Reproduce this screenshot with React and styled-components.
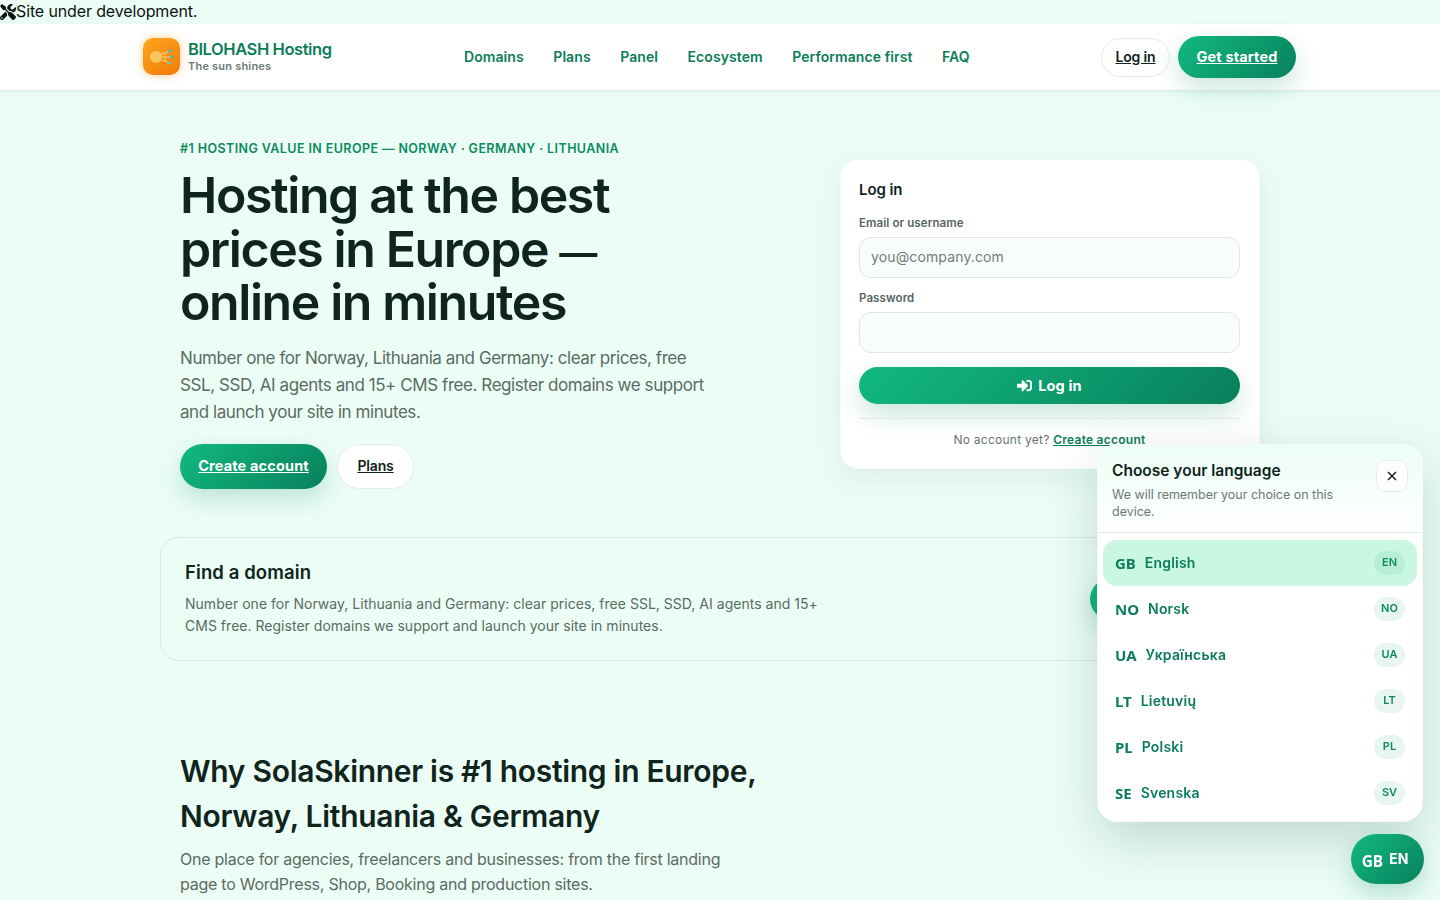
import React from 'react'
import styled, { createGlobalStyle } from 'styled-components'
import { FaTools, FaSignInAlt } from 'react-icons/fa'

const GlobalStyle = createGlobalStyle`
    html, body {
        margin: 0;
        padding: 0;
        background: #ecfdf5;
        font-family: Inter, "Noto Sans", sans-serif;
        color: #0f241c;
        overflow: hidden;
        height: 900px;
    }
`

const Banner = styled.div`
    height: 24px;
    display: flex;
    align-items: center;
    font-size: 16px;
    letter-spacing: -0.13px;
    line-height: 23px;
    padding-bottom: 1px;
    box-sizing: border-box;
    color: #0b1411;
    background: #ecfdf5;
`

const Header = styled.header`
    height: 66px;
    background: #fff;
    border-bottom: 1px solid #dcebe5;
    box-shadow: 0 1px 6px rgba(15, 80, 60, 0.05);
    box-sizing: content-box;
`

const HeaderInner = styled.div`
    width: 1152px;
    height: 66px;
    margin: 0 auto;
    display: flex;
    align-items: center;
`

const Brand = styled.div`
    width: 320px;
    display: flex;
    align-items: center;
    gap: 8px;
    margin-top: -1px;
`

const LogoBox = styled.div`
    width: 37px;
    height: 37px;
    border-radius: 10px;
    background: linear-gradient(145deg, #fda61f, #f27a06);
    box-shadow: 0 0 8px rgba(250, 160, 40, 0.55);
    display: flex;
    align-items: center;
    justify-content: center;
    margin-left: -1px;
`

const BrandName = styled.div`
    font-size: 16.5px;
    font-weight: 600;
    letter-spacing: -0.42px;
    color: #0b7d5a;
    line-height: 20px;
`

const BrandTag = styled.div`
    font-size: 11px;
    font-weight: 600;
    letter-spacing: 0.2px;
    color: #6b7a74;
    line-height: 15px;
`

const Nav = styled.nav`
    display: flex;
    gap: 29.5px;
    flex: 1;
    margin-top: -2px;
`

const NavLink = styled.a`
    font-size: 14px;
    font-weight: 600;
    letter-spacing: 0.08px;
    color: #0b7d5a;
`

const HeaderActions = styled.div`
    display: flex;
    gap: 8px;
    align-items: center;
`

const GhostButton = styled.a`
    display: flex;
    align-items: center;
    justify-content: center;
    box-sizing: border-box;
    width: ${p => p.$width}px;
    height: ${p => p.$height}px;
    padding-bottom: 2px;
    border-radius: 999px;
    background: #fff;
    border: 1px solid #e4ede9;
    font-size: 14px;
    font-weight: 600;
    letter-spacing: -0.15px;
    color: #0f241c;
    text-decoration: underline;
`

const PrimaryButton = styled.a`
    display: flex;
    align-items: center;
    justify-content: center;
    gap: 6px;
    box-sizing: border-box;
    width: ${p => (p.$width ? `${p.$width}px` : '100%')};
    height: ${p => p.$height}px;
    padding-bottom: ${p => (p.$plain ? 0 : 2)}px;
    border-radius: 999px;
    background: linear-gradient(135deg, #12b981, #08805c);
    box-shadow: 0 10px 24px rgba(16, 140, 100, 0.22);
    font-size: 14.5px;
    font-weight: 700;
    letter-spacing: 0.15px;
    color: #fff;
    text-decoration: ${p => (p.$plain ? 'none' : 'underline')};
`

const Main = styled.main`
    width: 1080px;
    margin: 0 auto;
`

const Hero = styled.section`
    display: grid;
    grid-template-columns: 1fr 420px;
    padding-top: 50px;
`

const Eyebrow = styled.div`
    font-size: 12.5px;
    font-weight: 600;
    letter-spacing: 0.41px;
    line-height: 16px;
    color: #0b8a63;
    text-transform: uppercase;
`

const Title = styled.h1`
    margin: 12px 0 0;
    font-size: 50px;
    font-weight: 600;
    letter-spacing: -1.4px;
    line-height: 53.5px;
    color: #0f241c;
`

const TitleDash = styled.span`
    font-size: 38px;
    line-height: 0;
`

const Lead = styled.p`
    margin: 15px 0 0;
    width: 530px;
    font-size: 17px;
    line-height: 27px;
    letter-spacing: -0.43px;
    color: #5a6b64;
`

const HeroActions = styled.div`
    display: flex;
    gap: 10px;
    margin-top: 18px;
`

const LoginCard = styled.div`
    margin-top: 18px;
    box-sizing: border-box;
    height: 310px;
    width: 420px;
    padding: 20px 19px 20px 18px;
    background: #fff;
    border: 1px solid #f5fbf8;
    border-radius: 18px;
    box-shadow: 0 10px 30px rgba(15, 80, 60, 0.08);
`

const CardTitle = styled.div`
    font-size: 15px;
    font-weight: 600;
    line-height: 19px;
    letter-spacing: -0.1px;
    color: #0f241c;
`

const FieldLabel = styled.label`
    display: block;
    margin-top: ${p => p.$top}px;
    font-size: 11.5px;
    font-weight: 600;
    line-height: 14px;
    letter-spacing: 0.1px;
    color: #56665f;
`

const Input = styled.div`
    box-sizing: border-box;
    margin-top: 7px;
    height: 41px;
    display: flex;
    align-items: center;
    padding: 0 11px 2px;
    background: #f9fcfd;
    border: 1px solid #dde8e4;
    border-radius: 12px;
    font-size: 14px;
    letter-spacing: 0.13px;
    color: #6f7d78;
`

const LoginAction = styled.div`
    margin-top: 14px;
`

const Rule = styled.div`
    margin-top: 14px;
    height: 1px;
    background: #dcebe5;
`

const CardFoot = styled.div`
    margin-top: 13px;
    text-align: center;
    font-size: 12px;
    line-height: 16px;
    letter-spacing: 0.25px;
    color: #66756f;
`

const FootLink = styled.a`
    font-weight: 600;
    color: #0b7d5a;
    text-decoration: underline;
`

const DomainCard = styled.section`
    box-sizing: border-box;
    width: 1120px;
    height: 124px;
    margin: 48px 0 0 -20px;
    padding: 22px 24px;
    background: #ecfdf5;
    border: 1px solid #d8ebe3;
    border-radius: 18px;
    display: flex;
    justify-content: space-between;
    align-items: center;
`

const DomainTitle = styled.h3`
    margin: 0;
    font-size: 18.5px;
    font-weight: 600;
    line-height: 24px;
    letter-spacing: 0.1px;
    color: #0f241c;
`

const DomainText = styled.p`
    margin: 9px 0 0;
    width: 650px;
    font-size: 14px;
    line-height: 22px;
    letter-spacing: 0.02px;
    color: #5a6b64;
`

const DomainCopy = styled.div`
    align-self: flex-start;
`

const Why = styled.section`
    margin-top: 88px;
`

const WhyTitle = styled.h2`
    margin: 0;
    width: 620px;
    font-size: 30px;
    font-weight: 600;
    line-height: 45px;
    letter-spacing: -0.3px;
    color: #0f241c;
`

const WhyText = styled.p`
    margin: 8px 0 0;
    width: 560px;
    font-size: 16px;
    line-height: 25px;
    letter-spacing: -0.25px;
    color: #5a6b64;
`

const LangPanel = styled.aside`
    position: fixed;
    left: 1097px;
    top: 444px;
    width: 326px;
    height: 378px;
    box-sizing: border-box;
    background: #fff;
    border-radius: 20px;
    border: 1px solid #f5fbf8;
    box-shadow: 0 18px 50px rgba(15, 80, 60, 0.2);
    overflow: hidden;
`

const LangHead = styled.div`
    height: 88px;
    box-sizing: border-box;
    padding: 15px 14px 15px 14px;
    display: flex;
    justify-content: space-between;
    align-items: flex-start;
    background: linear-gradient(180deg, #ecfdf5, #fff);
    border-bottom: 1px solid #dcebe5;
`

const LangTitle = styled.div`
    margin-top: 1px;
    font-size: 15.5px;
    font-weight: 600;
    line-height: 20px;
    color: #0f241c;
`

const LangDesc = styled.div`
    margin-top: 5px;
    width: 240px;
    font-size: 12.5px;
    line-height: 17px;
    letter-spacing: -0.02px;
    color: #6b7a74;
`

const CloseButton = styled.div`
    width: 32px;
    height: 32px;
    box-sizing: border-box;
    border-radius: 10px;
    background: #fff;
    border: 1px solid #e3eee9;
    display: flex;
    align-items: center;
    justify-content: center;
`

const LangList = styled.div`
    padding: 7px 5px;
`

const LangRow = styled.div`
    height: 46px;
    box-sizing: border-box;
    padding: 0 12px;
    border-radius: 14px;
    display: flex;
    align-items: center;
    gap: 9px;
    background: ${p => (p.$active ? '#c9f7e1' : 'transparent')};
    color: #0c7d5b;
`

const FlagCode = styled.span`
    font-family: "Noto Sans", sans-serif;
    font-size: 15px;
    font-weight: 700;
`

const LangName = styled.span`
    flex: 1;
    font-size: 14px;
    font-weight: 600;
    letter-spacing: 0.2px;
    position: relative;
    top: -1px;
`

const LangPill = styled.span`
    height: 24px;
    padding: 0 7px 2px;
    box-sizing: border-box;
    min-width: 31px;
    border-radius: 12px;
    display: flex;
    align-items: center;
    justify-content: center;
    font-size: 11px;
    font-weight: 600;
    background: ${p => (p.$active ? '#b9eed6' : '#e8f5f0')};
    color: #0c8a64;
`

const LangFab = styled.div`
    position: fixed;
    left: 1351px;
    top: 834px;
    width: 73px;
    height: 50px;
    box-sizing: border-box;
    padding-right: 5px;
    border-radius: 25px;
    background: linear-gradient(135deg, #12b981, #08805c);
    box-shadow: 0 10px 24px rgba(16, 140, 100, 0.25);
    color: #fff;
    display: flex;
    align-items: center;
    justify-content: center;
    gap: 6px;
`

const FabFlag = styled.span`
    font-family: "Noto Sans", sans-serif;
    font-size: 15.5px;
    font-weight: 700;
    position: relative;
    top: 2px;
`

const FabCode = styled.span`
    font-size: 14px;
    font-weight: 700;
    position: relative;
    top: -1px;
`

const navItems = ['Domains', 'Plans', 'Panel', 'Ecosystem', 'Performance first', 'FAQ']

const languages = [
    { flag: 'GB', name: 'English', code: 'EN', active: true },
    { flag: 'NO', name: 'Norsk', code: 'NO' },
    { flag: 'UA', name: 'Українська', code: 'UA' },
    { flag: 'LT', name: 'Lietuvių', code: 'LT' },
    { flag: 'PL', name: 'Polski', code: 'PL' },
    { flag: 'SE', name: 'Svenska', code: 'SV' },
]

const LogoMark = () => (
    <svg width="30" height="24" viewBox="0 0 30 24">
        <circle cx="9" cy="12" r="6" fill="#fcc65c" />
        <g stroke="#f6c98a" strokeWidth="1.2" fill="none">
            <path d="M14 9 L23 6 M14 12 L25 12 M14 15 L23 18 M18 8 L18 16" />
        </g>
        <circle cx="23" cy="6" r="1.8" fill="#4fb89a" />
        <circle cx="25" cy="12" r="1.8" fill="#4fb89a" />
        <circle cx="23" cy="18" r="1.8" fill="#6fbf9f" />
    </svg>
)

const CloseIcon = () => (
    <svg width="10" height="10" viewBox="0 0 10 10">
        <path d="M1 1 L9 9 M9 1 L1 9" stroke="#1c2b26" strokeWidth="1.6" fill="none" />
    </svg>
)

const App = () => (
    <>
        <GlobalStyle />
        <Banner>
            <FaTools size={16} />
            <span>Site under development.</span>
        </Banner>
        <Header>
            <HeaderInner>
                <Brand>
                    <LogoBox><LogoMark /></LogoBox>
                    <div>
                        <BrandName>BILOHASH Hosting</BrandName>
                        <BrandTag>The sun shines</BrandTag>
                    </div>
                </Brand>
                <Nav>
                    {navItems.map(item => <NavLink key={item}>{item}</NavLink>)}
                </Nav>
                <HeaderActions>
                    <GhostButton $width={69} $height={39}>Log in</GhostButton>
                    <PrimaryButton $width={118} $height={42}>Get started</PrimaryButton>
                </HeaderActions>
            </HeaderInner>
        </Header>
        <Main>
            <Hero>
                <div>
                    <Eyebrow>#1 hosting value in Europe — Norway · Germany · Lithuania</Eyebrow>
                    <Title>Hosting at the best<br />prices in Europe <TitleDash>—</TitleDash><br />online in minutes</Title>
                    <Lead>Number one for Norway, Lithuania and Germany: clear prices, free SSL, SSD, AI agents and 15+ CMS free. Register domains we support and launch your site in minutes.</Lead>
                    <HeroActions>
                        <PrimaryButton $width={147} $height={45}>Create account</PrimaryButton>
                        <GhostButton $width={77} $height={45}>Plans</GhostButton>
                    </HeroActions>
                </div>
                <LoginCard>
                    <CardTitle>Log in</CardTitle>
                    <FieldLabel $top={17}>Email or username</FieldLabel>
                    <Input>you@company.com</Input>
                    <FieldLabel $top={13}>Password</FieldLabel>
                    <Input />
                    <LoginAction>
                        <PrimaryButton $height={37} $plain><FaSignInAlt size={15} /> Log in</PrimaryButton>
                    </LoginAction>
                    <Rule />
                    <CardFoot>No account yet? <FootLink>Create account</FootLink></CardFoot>
                </LoginCard>
            </Hero>
            <DomainCard>
                <DomainCopy>
                    <DomainTitle>Find a domain</DomainTitle>
                    <DomainText>Number one for Norway, Lithuania and Germany: clear prices, free SSL, SSD, AI agents and 15+ CMS free. Register domains we support and launch your site in minutes.</DomainText>
                </DomainCopy>
                <PrimaryButton $width={165} $height={42} $plain />
            </DomainCard>
            <Why>
                <WhyTitle>Why SolaSkinner is #1 hosting in Europe, Norway, Lithuania &amp; Germany</WhyTitle>
                <WhyText>One place for agencies, freelancers and businesses: from the first landing page to WordPress, Shop, Booking and production sites.</WhyText>
            </Why>
        </Main>
        <LangPanel>
            <LangHead>
                <div>
                    <LangTitle>Choose your language</LangTitle>
                    <LangDesc>We will remember your choice on this device.</LangDesc>
                </div>
                <CloseButton><CloseIcon /></CloseButton>
            </LangHead>
            <LangList>
                {languages.map(lang => (
                    <LangRow key={lang.code} $active={lang.active}>
                        <FlagCode>{lang.flag}</FlagCode>
                        <LangName>{lang.name}</LangName>
                        <LangPill $active={lang.active}>{lang.code}</LangPill>
                    </LangRow>
                ))}
            </LangList>
        </LangPanel>
        <LangFab>
            <FabFlag>GB</FabFlag>
            <FabCode>EN</FabCode>
        </LangFab>
    </>
)

export default App
